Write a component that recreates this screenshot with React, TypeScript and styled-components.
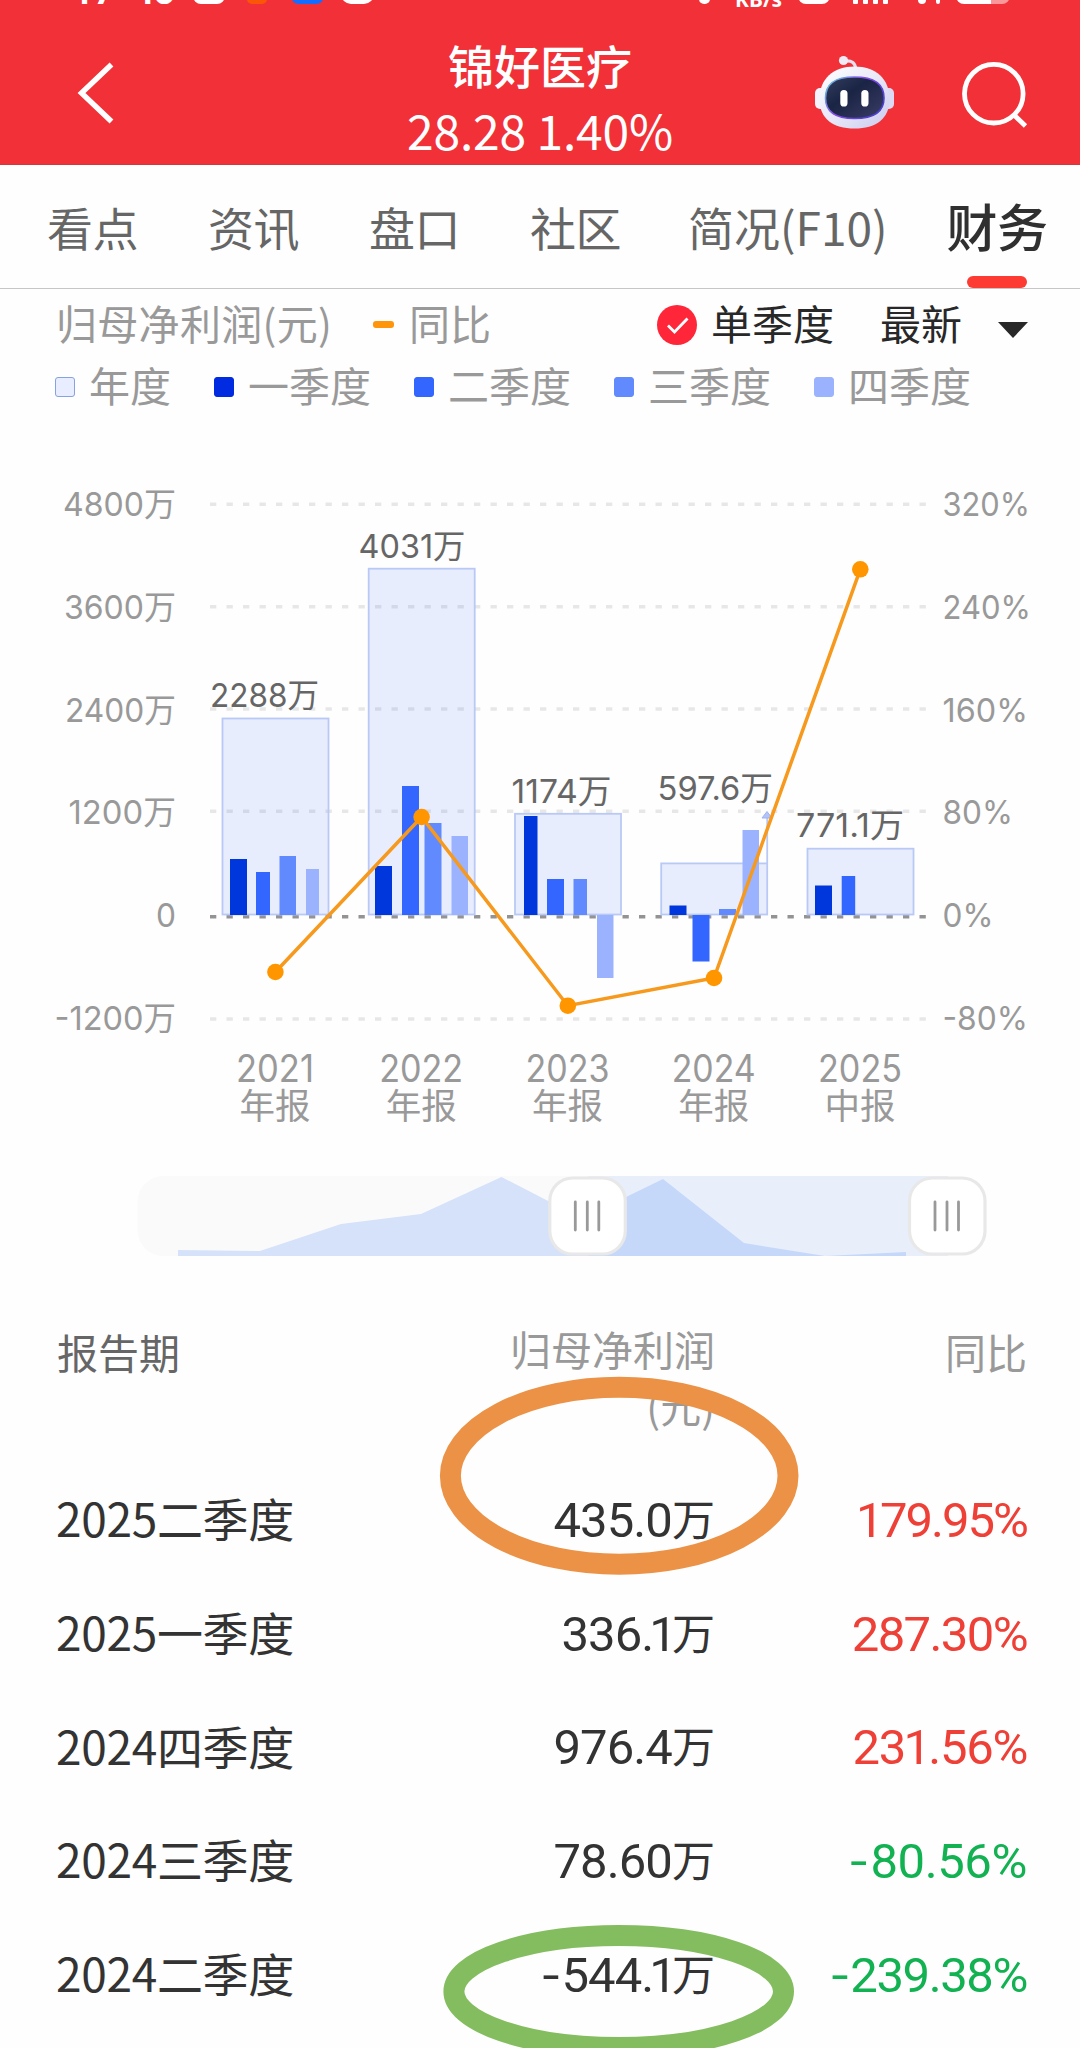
import React from "react";
import styled, { createGlobalStyle } from "styled-components";

const CJK = `"Noto Sans CJK SC", sans-serif`;

const GlobalStyle = createGlobalStyle`
  * { box-sizing: border-box; }
  body { margin: 0; background: #fff; }
`;

const Page = styled.main`
  position: relative;
  display: flex;
  flex-direction: column;
  width: 1080px;
  height: 2048px;
  overflow: hidden;
  background: #fefefe;
  font-family: ${CJK};
  color: #333;
`;

/* ---------- header ---------- */
const Header = styled.header`
  height: 165px;
  background: #f13037;
  color: #fff;
  border-bottom: 1px solid #cf3a40;
`;

const StatusBar = styled.div`
  display: flex;
  justify-content: space-between;
  height: 10px;
  overflow: hidden;
`;

const StatusGroup = styled.div`
  display: flex;
  align-items: flex-end;
  height: 4px;
`;

const Clock = styled.span`
  width: 102px;
  margin-left: 73px;
  font: 700 36px/26px Roboto, sans-serif;
  height: 25px;
  white-space: nowrap;
`;

const Colon = styled.span`
  position: relative;
  top: -9px;
  margin: 0 7px 0 2px;
`;

const Chip = styled.i<{ $w: number; $ml: number; $bg: string; $r?: number }>`
  width: ${(p) => p.$w}px;
  height: 20px;
  margin-left: ${(p) => p.$ml}px;
  border-radius: ${(p) => p.$r ?? 8}px;
  background: ${(p) => p.$bg};
`;

const Speed = styled.span`
  margin-left: 25px;
  margin-bottom: -5px;
  width: 46px;
  height: 20px;
  font: 700 21px/20px "Noto Sans", sans-serif;
`;

const HeaderRow = styled.div`
  display: grid;
  grid-template-columns: 360px 360px 360px;
  height: 154px;
`;

const BackIcon = styled.svg`
  margin: 49px 0 0 73px;
`;

const TitleBlock = styled.div`
  display: flex;
  flex-direction: column;
  align-items: center;
  padding-top: 21px;
`;

const StockName = styled.h1`
  margin: 0;
  font-size: 46px;
  font-weight: 500;
  line-height: 66px;
`;

const Quote = styled.div`
  font-size: 48px;
  line-height: 64px;
  letter-spacing: -0.2px;
  white-space: nowrap;
`;

const HeaderActions = styled.div`
  display: flex;
  gap: 63px;
  padding: 44px 0 0 94px;
`;

/* ---------- tabs ---------- */
const Tabs = styled.nav`
  display: flex;
  height: 124px;
  padding-left: 47px;
  border-bottom: 1px solid #c6c6c6;
`;

const Tab = styled.div<{ $active?: boolean; $gap: number; $ls?: number }>`
  display: flex;
  flex-direction: column;
  align-items: center;
  justify-content: space-between;
  margin-right: ${(p) => p.$gap}px;
  padding-top: ${(p) => (p.$active ? 20 : 21)}px;
  font-size: ${(p) => (p.$active ? 51 : 46)}px;
  font-weight: ${(p) => (p.$active ? 500 : 400)};
  line-height: 80px;
  letter-spacing: ${(p) => p.$ls ?? -0.5}px;
  color: ${(p) => (p.$active ? "#303030" : "#666")};
  white-space: nowrap;
`;

const Indicator = styled.i`
  width: 60px;
  height: 12px;
  border-radius: 6px;
  background: #fd3b33;
`;

/* ---------- legend ---------- */
const Legend = styled.section`
  height: 136px;
  padding: 2px 50px 0 55px;
  font-size: 41px;
  color: #999;
`;

const LegendTop = styled.div`
  display: flex;
  align-items: center;
  height: 62px;
  line-height: 62px;
  white-space: nowrap;
`;

const Metric = styled.span`
  width: 318px;
  padding-left: 1px;
  letter-spacing: 0.3px;
`;

const Dash = styled.i`
  width: 21px;
  height: 7px;
  margin: 4px 15px 0 0;
  border-radius: 3px;
  background: #ff950a;
`;

const Compare = styled.span`
  width: 248px;
`;

const CheckIcon = styled.svg`
  margin-top: 5px;
`;

const Filter = styled.span<{ $w: number }>`
  width: ${(p) => p.$w}px;
  padding-left: 14px;
  color: #282828;
`;

const Caret = styled.svg`
  margin-top: 15px;
`;

const LegendItems = styled.div`
  display: flex;
  align-items: center;
  gap: 43px;
  height: 62px;
  white-space: nowrap;
`;

const LegendItem = styled.span`
  display: flex;
  align-items: center;
  gap: 14px;
  line-height: 60px;
`;

const Swatch = styled.i<{ $c: string; $b?: string }>`
  width: 20px;
  height: 20px;
  margin-top: 5px;
  border-radius: 3px;
  background: ${(p) => p.$c};
  border: 1px solid ${(p) => p.$b ?? p.$c};
`;

const Chart = styled.svg`
  display: block;
  width: 1080px;
  height: 741px;
  flex: none;
`;

/* ---------- range slider ---------- */
const Range = styled.svg`
  display: block;
  width: 1080px;
  height: 100px;
  flex: none;
`;

/* ---------- table ---------- */
const Table = styled.section`
  display: flex;
  flex-direction: column;
  margin-top: 54px;
  padding: 0 53px 0 57px;
`;

const TableHead = styled.div`
  display: grid;
  grid-template-columns: 300px 358px 1fr;
  height: 144px;
  font-size: 41px;
  line-height: 57px;
  color: #999;
  text-align: right;
`;

const HeadCell = styled.div<{ $first?: boolean }>`
  padding-top: ${(p) => (p.$first ? 3 : 0)}px;
`;

const PeriodHead = styled(HeadCell)`
  color: #666;
  text-align: left;
`;

const Row = styled.div`
  display: grid;
  grid-template-columns: 300px 358px 1fr;
  align-items: center;
  height: 113.7px;
  white-space: nowrap;
`;

const Period = styled.div`
  margin: -7px 0 0 -1px;
  font-size: 46px;
  line-height: 70px;
  letter-spacing: -0.3px;
`;

const Num = styled.div<{ $tone?: "up" | "down"; $ls?: number }>`
  font-family: Roboto, ${CJK};
  font-size: 49px;
  line-height: 70px;
  letter-spacing: ${(p) => p.$ls ?? -0.9}px;
  text-align: right;
  color: ${(p) => (p.$tone === "up" ? "#ee4037" : p.$tone === "down" ? "#12b151" : "#333")};
`;

/* the figure "1" and the minus sign take their own widths, the rest is tabular */
const One = styled.span<{ $trim: number }>`
  margin: 0 -${(p) => p.$trim / 2}px;
`;

const Minus = styled.span`
  display: inline-block;
  margin-right: 5px;
  transform: scaleX(1.25);
`;

const Wan = styled.span`
  position: relative;
  top: -1px;
  font: 43px/1 ${CJK};
  letter-spacing: 0;
`;

const Marks = styled.svg`
  position: absolute;
  left: 0;
  top: 1360px;
  pointer-events: none;
`;

const grid = [
  { y: 504.3, l: "4800万", lx: 63, r: "320%", rx: 1030 },
  { y: 606.7, l: "3600万", lx: 64, r: "240%", rx: 1031 },
  { y: 709, l: "2400万", lx: 65, r: "160%", rx: 1028 },
  { y: 811.3, l: "1200万", lx: 68.5, r: "80%", rx: 1013 },
  { y: 916.7, l: "0", lx: 156, r: "0%", rx: 993.5 },
  { y: 1019, l: "-1200万", lx: 54.5, r: "-80%", rx: 1028 },
];
const baselines = [515.7, 618.5, 721.7, 823.7, 926.5, 1029.7];

const Q = ["#0037dd", "#3366ff", "#628aff", "#9bb3ff"];

type Group = {
  x: number;
  top: number;
  label: string;
  lx: number;
  lw: number;
  ly: number;
  year: string;
  kind: string;
  bars: [number, number, number, number][];
};

const groups: Group[] = [
  { x: 222.5, top: 718.5, label: "2288万", lx: 210, lw: 109, ly: 707, year: "2021", kind: "年报",
    bars: [[230, 17, 859, 915], [256, 14, 872, 915], [279.5, 16.5, 856, 915], [306, 13, 869, 915]] },
  { x: 368.7, top: 568.7, label: "4031万", lx: 358.5, lw: 107, ly: 557.7, year: "2022", kind: "年报",
    bars: [[375, 17, 866, 915], [402, 17, 786, 915], [424.5, 17, 823, 915], [451.5, 16.5, 836, 915]] },
  { x: 515, top: 813.8, label: "1174万", lx: 511.5, lw: 100, ly: 803, year: "2023", kind: "年报",
    bars: [[524, 13.5, 816, 915], [547, 17, 879, 915], [573.5, 13.5, 879, 915], [597, 16.5, 915, 978]] },
  { x: 661.2, top: 863.4, label: "597.6万", lx: 657.5, lw: 115.5, ly: 799.5, year: "2024", kind: "年报",
    bars: [[669.5, 17, 905.5, 915], [692.5, 17, 915, 961.5], [719, 17, 909, 915], [742.5, 16.5, 830, 915]] },
  { x: 807.5, top: 848.7, label: "771.1万", lx: 796, lw: 108, ly: 836.7, year: "2025", kind: "中报",
    bars: [[815, 17, 885.5, 915], [841.7, 13.5, 876, 915]] },
];

const trend: [number, number][] = [
  [275.4, 972], [421.6, 817], [567.8, 1005.7], [714, 978], [860.3, 569.3],
];

const rows = [
  { p: "2025二季度", v: "435.0", c: "179.95%", up: true, ls: -2 },
  { p: "2025一季度", v: "336.1", c: "287.30%", up: true, ls: -1.6 },
  { p: "2024四季度", v: "976.4", c: "231.56%", up: true, ls: -1.3 },
  { p: "2024三季度", v: "78.60", c: "-80.56%", up: false, ls: -0.4 },
  { p: "2024二季度", v: "-544.1", c: "-239.38%", up: false, ls: -1.4 },
];

const FF = `Inter, "Noto Sans CJK SC", sans-serif`;

function Figures({ text, trim }: { text: string; trim: number }) {
  return (
    <>
      {text.split(/([-1])/).map((part, i) => {
        if (part === "1") return <One key={i} $trim={trim}>1</One>;
        if (part === "-") return <Minus key={i}>-</Minus>;
        return part;
      })}
    </>
  );
}

function ProfitChart() {
  return (
    <Chart viewBox="0 425 1080 741" fontFamily={FF}>
      {grid.map((g, i) => (
        <g key={g.l}>
          <line x1={210} x2={926.5} y1={g.y} y2={g.y} strokeWidth={3.4}
            stroke={g.l === "0" ? "#939393" : "#e7e7e7"} strokeDasharray="6.3 10.2" />
          <text x={g.lx} y={baselines[i]} fontSize={33} fill="#999"
            textLength={176 - g.lx} lengthAdjust="spacingAndGlyphs">{g.l}</text>
          <text x={942.5} y={baselines[i]} fontSize={33} fill="#999"
            textLength={g.rx - 942.5} lengthAdjust="spacingAndGlyphs">{g.r}</text>
        </g>
      ))}
      {groups.map((g) => (
        <g key={g.year}>
          <rect x={g.x} y={g.top} width={106} height={914.5 - g.top}
            fill="rgba(51,102,255,0.108)" stroke="#b9c9f5" strokeWidth={1.8} />
          <text x={g.lx} y={g.ly} fontSize={33} fill="#666"
            textLength={g.lw} lengthAdjust="spacingAndGlyphs">{g.label}</text>
          {g.bars.map(([x, w, y1, y2], i) => (
            <rect key={i} x={x} y={y1} width={w} height={y2 - y1} fill={Q[i]} />
          ))}
          <text x={g.x + 52.5} y={1082} fontSize={37.5} fill="#999" textAnchor="middle"
            textLength={g.year === "2021" ? 78 : 84} lengthAdjust="spacingAndGlyphs">{g.year}</text>
          <text x={g.x + 52.5} y={1119} fontSize={35.5} fill="#999" textAnchor="middle">{g.kind}</text>
        </g>
      ))}
      <path d="M767.2 863V818" stroke="#b9c9f5" strokeWidth={1.8} />
      <path d="M762 818L767 811.5L772 818Z" fill="#b3c4fa" stroke="#9db3f0" strokeWidth={1} />
      <polyline points={trend.map((p) => p.join(",")).join(" ")} fill="none" stroke="#f6991d" strokeWidth={3.5} />
      {trend.map(([x, y]) => (
        <circle key={x} cx={x} cy={y} r={8.3} fill="#ff9600" />
      ))}
    </Chart>
  );
}

function Handle({ x }: { x: number }) {
  return (
    <g>
      <rect x={x + 1.5} y={1178} width={75.5} height={76} rx={23} fill="#fff" stroke="#e8e8e8" strokeWidth={3.2} />
      {[27, 39, 50.5].map((d) => (
        <line key={d} x1={x + d} x2={x + d} y1={1202} y2={1230} stroke="#999" strokeWidth={2.8} strokeLinecap="round" />
      ))}
    </g>
  );
}

function RangeSlider() {
  return (
    <Range viewBox="0 1166 1080 100">
      <defs>
        <clipPath id="left"><rect x={137} y={1166} width={451} height={100} /></clipPath>
        <clipPath id="right"><rect x={588} y={1166} width={400} height={100} /></clipPath>
        <path id="area" d="M178 1250L260 1251L341 1224L421 1214L501.5 1177L582 1218.5L663 1179L744 1243L825 1256L906 1252V1256H178Z" />
      </defs>
      <rect x={137.5} y={1176} width={830} height={80} rx={26} fill="#fafafa" />
      <rect x={588} y={1176} width={360} height={80} fill="#e8effb" />
      <use href="#area" fill="#d5e2fa" clipPath="url(#left)" />
      <use href="#area" fill="#c5d8fa" clipPath="url(#right)" />
      <Handle x={548.3} />
      <Handle x={908} />
    </Range>
  );
}

function Robot() {
  return (
    <svg width={82} height={76} viewBox="814 54 82 76">
      <defs>
        <linearGradient id="shell" x1="0" y1="0" x2="1" y2="1">
          <stop offset="0" stopColor="#fff" />
          <stop offset="0.55" stopColor="#e6e6f8" />
          <stop offset="1" stopColor="#c9c9ee" />
        </linearGradient>
        <linearGradient id="rim" x1="0" y1="0" x2="1" y2="0.6">
          <stop offset="0" stopColor="#5fd6d8" />
          <stop offset="0.5" stopColor="#8a4be8" />
          <stop offset="1" stopColor="#4b3fd0" />
        </linearGradient>
        <linearGradient id="visor" x1="0" y1="0" x2="1" y2="1">
          <stop offset="0" stopColor="#34405f" />
          <stop offset="0.4" stopColor="#1a2444" />
          <stop offset="1" stopColor="#3a3d66" />
        </linearGradient>
      </defs>
      <path d="M845 61Q855.5 60 855.5 69" fill="none" stroke="#e3e0f2" strokeWidth={3.2} />
      <circle cx={843.5} cy={60.5} r={4.6} fill="#efeaf6" />
      <rect x={815} y={88} width={12} height={21} rx={5} fill="#f4f3fc" />
      <rect x={882} y={88} width={12} height={21} rx={5} fill="#dcd9f4" />
      <path d="M854.5 66.5C876 66.5 889.5 79 889.5 99C889.5 119 876 128.5 854.5 128.5C833 128.5 819.5 119 819.5 99C819.5 79 833 66.5 854.5 66.5Z" fill="url(#shell)" />
      <path d="M854.5 77C875 77 884 84 884 98C884 112 874 118.5 854.5 118.5C835 118.5 825.5 112 825.5 98C825.5 84 834 77 854.5 77Z" fill="url(#visor)" stroke="url(#rim)" strokeWidth={1.6} />
      <rect x={840.3} y={90} width={7.2} height={16.5} rx={3.6} fill="#fff" />
      <rect x={861.3} y={90} width={7.2} height={16.5} rx={3.6} fill="#fff" />
    </svg>
  );
}

export default function App() {
  return (
    <Page>
      <GlobalStyle />
      <Header>
        <StatusBar>
          <StatusGroup>
            <Clock>17<Colon>:</Colon>48</Clock>
            <Chip $w={32} $ml={18} $bg="#fff" />
            <Chip $w={20} $ml={22} $bg="#fb5607" $r={5} />
            <Chip $w={33} $ml={24} $bg="#156dff" />
            <Chip $w={33} $ml={17} $bg="#fff" $r={14} />
          </StatusGroup>
          <StatusGroup>
            <Chip $w={11} $ml={0} $bg="#fff" $r={5} />
            <Speed>KB/s</Speed>
            <Chip $w={32} $ml={17} $bg="#fff" />
            <Chip $w={5} $ml={23} $bg="#fff" $r={1} />
            <Chip $w={5} $ml={5} $bg="#fff" $r={1} />
            <Chip $w={5} $ml={5} $bg="#fff" $r={1} />
            <Chip $w={5} $ml={5} $bg="#fff" $r={1} />
            <Chip $w={8} $ml={30} $bg="#fff" $r={4} />
            <Chip $w={4} $ml={10} $bg="#fff" $r={2} />
            <Chip $w={54} $ml={16} $bg="linear-gradient(90deg, #fff 64%, #f9979b 64%)" />
            <Chip $w={70} $ml={0} $bg="none" />
          </StatusGroup>
        </StatusBar>
        <HeaderRow>
          <BackIcon width={46} height={68} viewBox="72 59 46 68">
            <path d="M110.5 64.5L80.5 93L110.5 121.5" fill="none" stroke="#fff" strokeWidth={5.4} />
          </BackIcon>
          <TitleBlock>
            <StockName>锦好医疗</StockName>
            <Quote>28.28 1.40%</Quote>
          </TitleBlock>
          <HeaderActions>
            <Robot />
            <svg width={70} height={76} viewBox="958 54 70 76">
              <circle cx={992.8} cy={93.7} r={29.3} fill="none" stroke="#fff" strokeWidth={4.8} />
              <path d="M1012 114L1024.5 126" stroke="#fff" strokeWidth={4.8} />
            </svg>
          </HeaderActions>
        </HeaderRow>
      </Header>

      <Tabs>
        <Tab $gap={70}>看点</Tab>
        <Tab $gap={70}>资讯</Tab>
        <Tab $gap={70}>盘口</Tab>
        <Tab $gap={67}>社区</Tab>
        <Tab $gap={59} $ls={0}>简况(F10)</Tab>
        <Tab $gap={0} $active>财务<Indicator /></Tab>
      </Tabs>

      <Legend>
        <LegendTop>
          <Metric>归母净利润(元)</Metric>
          <Dash />
          <Compare>同比</Compare>
          <CheckIcon width={40} height={40} viewBox="0 0 40 40">
            <circle cx={20} cy={20} r={20} fill="#ff2639" />
            <path d="M11 20.5L17.5 27L30.5 13.5" fill="none" stroke="#fff" strokeWidth={2.8} />
          </CheckIcon>
          <Filter $w={169}>单季度</Filter>
          <Filter $w={132}>最新</Filter>
          <Caret width={30} height={16} viewBox="0 0 30 16">
            <path d="M0 0H30L15 16Z" fill="#282828" />
          </Caret>
        </LegendTop>
        <LegendItems>
          <LegendItem><Swatch $c="#e8eeff" $b="#86a2e0" />年度</LegendItem>
          <LegendItem><Swatch $c="#002be0" />一季度</LegendItem>
          <LegendItem><Swatch $c="#3366ff" />二季度</LegendItem>
          <LegendItem><Swatch $c="#628aff" />三季度</LegendItem>
          <LegendItem><Swatch $c="#9bb3ff" />四季度</LegendItem>
        </LegendItems>
      </Legend>

      <ProfitChart />
      <RangeSlider />

      <Table>
        <TableHead>
          <PeriodHead $first>报告期</PeriodHead>
          <HeadCell>归母净利润<br />(元)</HeadCell>
          <HeadCell $first>同比</HeadCell>
        </TableHead>
        {rows.map((r) => (
          <Row key={r.p}>
            <Period>{r.p}</Period>
            <Num><Figures text={r.v} trim={8} /><Wan>万</Wan></Num>
            <Num $tone={r.up ? "up" : "down"} $ls={r.ls}><Figures text={r.c} trim={3} /></Num>
          </Row>
        ))}
      </Table>

      <Marks width={1080} height={688} viewBox="0 1360 1080 688">
        <ellipse cx={619.2} cy={1475.8} rx={168.8} ry={88.5} fill="none" stroke="#ec9246" strokeWidth={21} />
        <ellipse cx={618.7} cy={1991.5} rx={164.8} ry={56} fill="none" stroke="#84bd5f" strokeWidth={21} />
      </Marks>
    </Page>
  );
}
